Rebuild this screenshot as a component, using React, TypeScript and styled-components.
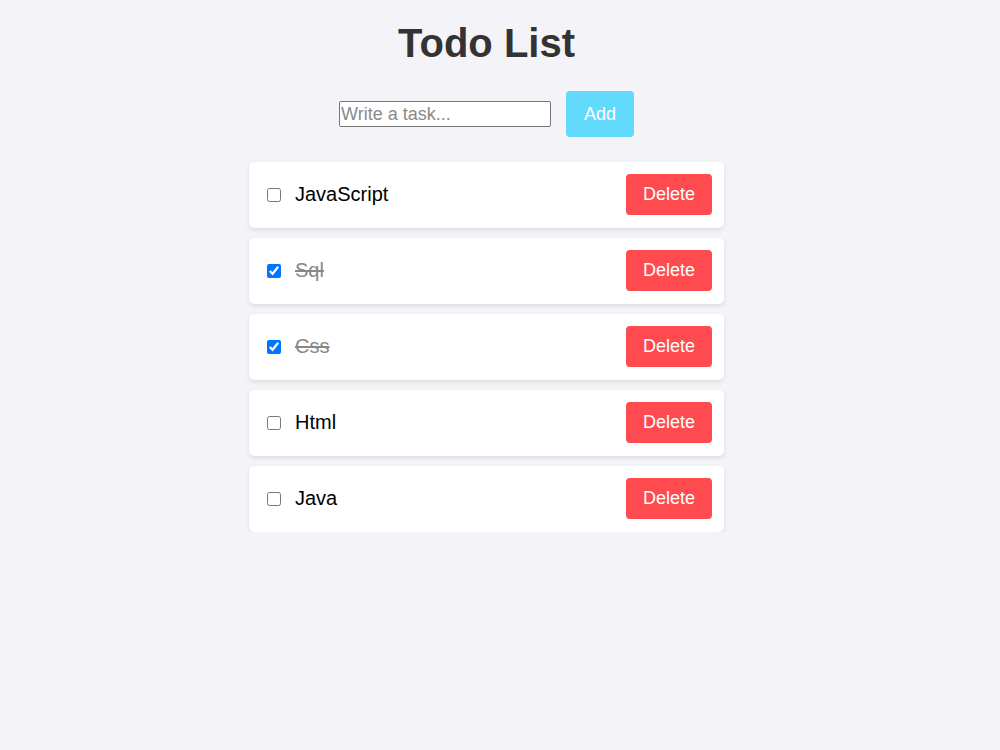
import styled, { createGlobalStyle } from 'styled-components';

type Task = {
  id: number;
  text: string;
  done: boolean;
}

const tasks: Task[] = [
  { id: 1, text: 'JavaScript', done: false },
  { id: 2, text: 'Sql', done: true },
  { id: 3, text: 'Css', done: true },
  { id: 4, text: 'Html', done: false },
  { id: 5, text: 'Java', done: false },
];

const GlobalStyle = createGlobalStyle`
  body {
    margin: 0;
    background: #f4f4f8;
    font-family: "Liberation Sans", Arial, sans-serif;
  }
`

const Page = styled.div`
  display: flex;
  flex-direction: column;
  align-items: center;
  padding: 20px 27px 0 0;
`
const Title = styled.h1`
  margin: 0;
  font-size: 40px;
  line-height: 46px;
  font-weight: 700;
  color: #333;
`
const Form = styled.div`
  display: flex;
  align-items: center;
  gap: 15px;
  margin-top: 25px;
`
const Input = styled.input`
  width: 212px;
  height: 26px;
  box-sizing: border-box;
  padding: 0 1px;
  border: 1px solid #767676;
  border-radius: 2px;
  font-family: inherit;
  font-size: 18px;
  background: #fff;
  &::placeholder {
    color: #8a8a8a;
  }
`
const AddButton = styled.button`
  height: 46px;
  padding: 0 18px;
  border: none;
  border-radius: 4px;
  background: #61dafb;
  color: #fff;
  font-family: inherit;
  font-size: 18px;
  cursor: pointer;
`
const List = styled.ul`
  list-style: none;
  margin: 25px 0 0;
  padding: 0;
  width: 475px;
  display: flex;
  flex-direction: column;
  gap: 10px;
`
const Item = styled.li`
  display: flex;
  align-items: center;
  padding: 12px 12px 13px 18px;
  background: #fff;
  border-radius: 5px;
  box-shadow: 0 2px 4px rgba(0, 0, 0, 0.1);
`
const Check = styled.input`
  width: 14px;
  height: 14px;
  margin: 0 14px 0 0;
`
const Label = styled.span<{ $done: boolean }>`
  flex: 1;
  font-size: 20px;
  color: ${({ $done }) => ($done ? '#888' : '#000')};
  text-decoration: ${({ $done }) => ($done ? 'line-through' : 'none')};
`
const DeleteButton = styled.button`
  height: 41px;
  padding: 0 17px;
  border: none;
  border-radius: 4px;
  background: #ff4a4f;
  color: #fff;
  font-family: inherit;
  font-size: 18px;
  cursor: pointer;
`

const App = () => {
  return (
    <>
      <GlobalStyle />
      <Page>
        <Title>Todo List</Title>
        <Form>
          <Input type="text" placeholder="Write a task..." />
          <AddButton>Add</AddButton>
        </Form>
        <List>
          {tasks.map(({ id, text, done }) => (
            <Item key={id}>
              <Check type="checkbox" defaultChecked={done} />
              <Label $done={done}>{text}</Label>
              <DeleteButton>Delete</DeleteButton>
            </Item>
          ))}
        </List>
      </Page>
    </>
  );
};

export default App;
